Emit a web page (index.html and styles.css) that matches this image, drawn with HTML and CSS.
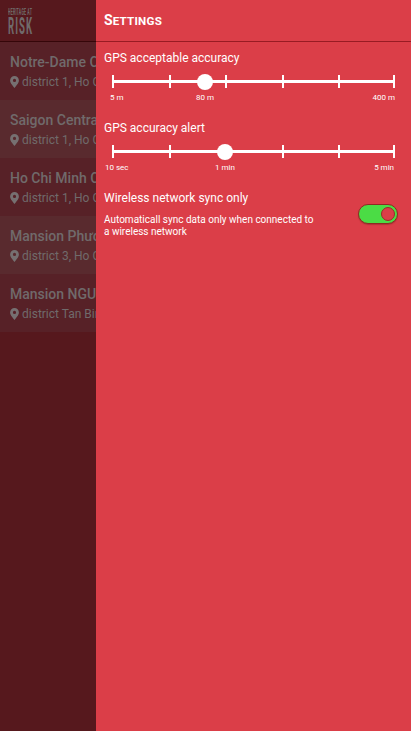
FILE: index.html
```html
<!DOCTYPE html>
<html lang="en">
<head>
<meta charset="utf-8">
<meta name="viewport" content="width=device-width">
<title>Settings</title>
<link rel="stylesheet" href="styles.css">
</head>
<body>
<svg class="defs" width="0" height="0"><symbol id="pin" viewBox="0 0 9 12"><path fill-rule="evenodd" d="M4.5 0A4.4 4.4 0 0 0 .1 4.4C.1 6.7 1.5 8 4.5 12 7.5 8 8.9 6.7 8.9 4.4A4.4 4.4 0 0 0 4.5 0zM4.5 2.8a1.6 1.6 0 1 1 0 3.2 1.6 1.6 0 0 1 0-3.2z"/></symbol></svg>
<div class="app">
  <aside class="places">
    <header class="brand">
      <svg width="26" height="28" viewBox="0 0 26 28">
        <text transform="translate(0 6.5) scale(.42 1)" textLength="57" lengthAdjust="spacing" class="logo-top">HERITAGE AT</text>
        <text transform="translate(0 25.8) scale(.4 1)" textLength="60" lengthAdjust="spacing" class="logo-main">RISK</text>
      </svg>
    </header>
    <ul class="list">
      <li><h2>Notre-Dame C</h2><p><svg class="pin"><use href="#pin"/></svg>district 1, Ho C</p></li>
      <li><h2>Saigon Centra</h2><p><svg class="pin"><use href="#pin"/></svg>district 1, Ho C</p></li>
      <li><h2>Ho Chi Minh C</h2><p><svg class="pin"><use href="#pin"/></svg>district 1, Ho C</p></li>
      <li><h2>Mansion Phươ</h2><p><svg class="pin"><use href="#pin"/></svg>district 3, Ho C</p></li>
      <li><h2>Mansion NGU</h2><p><svg class="pin"><use href="#pin"/></svg>district Tan Bin</p></li>
    </ul>
  </aside>
  <main class="settings">
    <header class="title"><h1>S<span>ETTINGS</span></h1></header>
    <section class="setting">
      <h3>GPS acceptable accuracy</h3>
      <svg class="slider" width="299" height="18" viewBox="0 0 299 18">
        <path d="M8 7h283v3H8zM8 2h2v13H8zM65 2h2v13h-2zM121 2h2v13h-2zM178 2h2v13h-2zM234 2h2v13h-2zM289 2h2v13h-2z"/>
        <circle cx="101" cy="9" r="8"/>
      </svg>
      <div class="labels"><span class="min-metres">5 m</span><span class="mid-metres">80 m</span><span class="max-metres">400 m</span></div>
    </section>
    <section class="setting">
      <h3>GPS accuracy alert</h3>
      <svg class="slider" width="299" height="18" viewBox="0 0 299 18">
        <path d="M8 7h283v3H8zM8 2h2v13H8zM65 2h2v13h-2zM121 2h2v13h-2zM178 2h2v13h-2zM234 2h2v13h-2zM289 2h2v13h-2z"/>
        <circle cx="121" cy="9" r="8"/>
      </svg>
      <div class="labels"><span class="min-time">10 sec</span><span class="mid-time">1 min</span><span class="max-time">5 min</span></div>
    </section>
    <section class="sync">
      <div><h3>Wireless network sync only</h3><p>Automaticall sync data only when connected to<br>a wireless network</p></div>
      <div class="toggle"><i></i></div>
    </section>
  </main>
</div>
</body>
</html>
```
FILE: styles.css
```css
* { box-sizing: border-box; margin: 0; padding: 0; }
body { font-family: Roboto, sans-serif; overflow: hidden; }
.defs { display: block; height: 0; }
.app { display: flex; width: 411px; height: 731px; }
.places { width: 96px; overflow: hidden; background: #56181d; color: #706a6b; }
.brand { height: 42px; padding: 8px; border-bottom: 1px solid #350609; }
.brand svg { display: block; fill: #706a6b; }
.logo-top { font-size: 8.5px; font-weight: 700; }
.logo-main { font-size: 24px; font-weight: 700; }
.list { list-style: none; }
.list li { height: 58px; padding: 12px 0 0 10px; white-space: nowrap; background: #572127; }
.list li:nth-child(even) { background: #592a2e; }
.list h2 { font-size: 14px; font-weight: 500; line-height: 17px; }
.list p { display: flex; align-items: center; gap: 3px; margin-top: 3px; font-size: 12px; line-height: 16px; }
.pin { width: 9px; height: 12px; fill: #767071; flex: none; }
.settings { width: 315px; background: #db3e48; color: #fff; }
.title { height: 42px; padding: 12px 8px 0; border-bottom: 1px solid #981b23; }
.title h1 { font-size: 14px; font-weight: 700; line-height: 17px; }
.title h1 span { font-size: 11.6px; letter-spacing: .25px; }
.setting { height: 70px; padding: 8px 8px 0; }
h3 { font-size: 12px; font-weight: 400; line-height: 16px; }
.slider { display: block; margin-top: 7px; fill: #fff; }
.labels { display: grid; grid-template-columns: 81px 80px 1fr; margin-top: 1px; font-size: 8px; line-height: 12px; }
.min-metres { padding-left: 6px; }
.mid-metres { padding-left: 11px; }
.max-metres { text-align: right; padding-right: 8px; }
.min-time { padding-left: 1px; }
.mid-time { padding-left: 30px; }
.max-time { text-align: right; padding-right: 9px; }
.sync { display: flex; justify-content: space-between; padding: 8px 13px 0 8px; }
.sync p { margin-top: 8px; font-size: 10px; line-height: 12px; white-space: nowrap; }
.toggle { width: 40px; height: 20px; margin-top: 14px; padding: 2px; display: flex; justify-content: flex-end; border: 1px solid #8d2b23; border-radius: 10px; background: #4bdc45; box-shadow: 0 1px 1px #8d202a80; }
.toggle i { width: 14px; height: 14px; border: 1px solid #982d28; border-radius: 50%; background: #db3e48; }
```
